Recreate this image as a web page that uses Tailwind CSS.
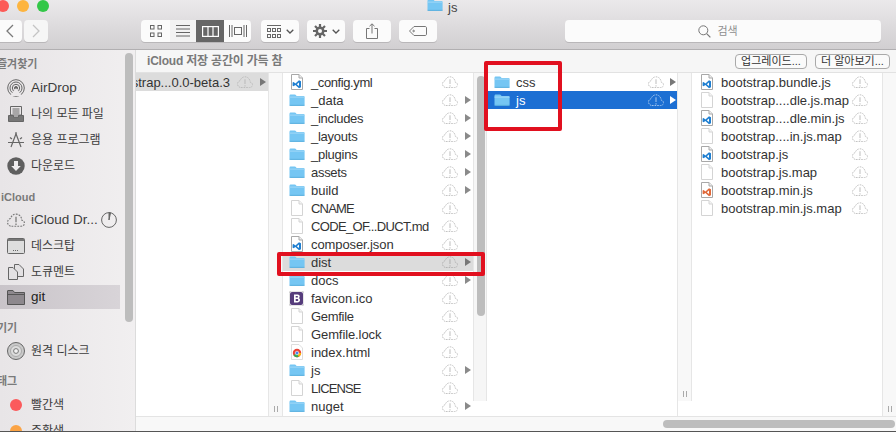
<!DOCTYPE html>
<html lang="ko">
<head>
<meta charset="utf-8">
<script src="https://cdn.jsdelivr.net/npm/@tailwindcss/browser@4"></script>
</head>
<body class="m-0 overflow-hidden bg-white">
<svg width="0" height="0" class="absolute">
  <defs>
    <symbol id="folder" viewBox="0 0 16 14" preserveAspectRatio="none">
      <g transform="translate(0 1) scale(1 .86)">
      <path d="M0.5 2.2C0.5 1.2 1 .6 2 .6H5.6C6.4.6 6.8 1 7.2 1.6L7.6 2.2H14.2C15 2.2 15.6 2.8 15.6 3.6V12.2C15.6 13 15 13.6 14.2 13.6H1.9C1 13.6.5 13 .5 12.2Z" fill="#75c6f3"/>
      <path d="M.5 3.6H15.6" stroke="#a6dcf8" stroke-width="1"/>
      <path d="M.5 13.2H15.6" stroke="#55acdd" stroke-width="1"/>
      </g>
    </symbol>
    <symbol id="file" viewBox="0 0 12 16">
      <path d="M.5.5H8L11.5 4V15.5H.5Z" fill="#fff" stroke="#d4d4d4"/>
      <path d="M8 .5V4H11.5" fill="#f4f4f4" stroke="#d4d4d4"/>
    </symbol>
    <symbol id="vsblue" viewBox="0 0 12 16">
      <path d="M.5.5H8L11.5 4V15.5H.5Z" fill="#fff" stroke="#a8a8a8"/>
      <path d="M8 .5V4H11.5" fill="#eee" stroke="#a8a8a8"/>
      <path d="M8 6.2L10 7.2V13.2L8 14.2L4.4 11L2.6 12.3L1.6 11.8V8.6L2.6 8.1L4.4 9.4ZM8 8.4L5.8 10.2L8 12Z" fill="#1f7fd1"/>
    </symbol>
    <symbol id="vsorange" viewBox="0 0 12 16">
      <path d="M.5.5H8L11.5 4V15.5H.5Z" fill="#fff" stroke="#a8a8a8"/>
      <path d="M8 .5V4H11.5" fill="#eee" stroke="#a8a8a8"/>
      <path d="M8 6.2L10 7.2V13.2L8 14.2L4.4 11L2.6 12.3L1.6 11.8V8.6L2.6 8.1L4.4 9.4ZM8 8.4L5.8 10.2L8 12Z" fill="#e0693a"/>
    </symbol>
    <symbol id="cloud" viewBox="0 0 16 12">
      <path d="M4 11.5H12.6C14.4 11.5 15.5 10.3 15.5 8.8C15.5 7.4 14.5 6.4 13.2 6.2C13 3 10.8.8 8 .8C5.6.8 3.8 2.4 3.2 4.6C1.6 5 .5 6.3.5 8C.5 10 2 11.5 4 11.5Z" fill="none" stroke="currentColor" stroke-dasharray="1.6 1"/>
      <path d="M8 3.2V8M8 9.2V10.4" stroke="currentColor" stroke-width="1.1"/>
    </symbol>
    <symbol id="arrow" viewBox="0 0 6 8">
      <path d="M0 0L6 4L0 8Z" fill="currentColor"/>
    </symbol>
  </defs>
</svg>

<div class="relative w-[896px] h-[432px] overflow-hidden flex flex-col text-[13px] text-[#333] [font-family:'Liberation_Sans','Noto_Sans_CJK_KR',sans-serif]">

  <!-- title bar -->
  <header class="h-[50px] shrink-0 flex flex-col border-b border-[#b1afb1] bg-gradient-to-b from-[#ebe9eb] to-[#d1cfd1]">
    <div class="h-[20px] flex items-start relative">
      <div class="flex gap-[8px] ml-[-3px] mt-0">
        <span class="size-[12px] rounded-full bg-[#fc5b57]"></span>
        <span class="size-[12px] rounded-full bg-[#fdb43f]"></span>
        <span class="size-[12px] rounded-full bg-[#33c748]"></span>
      </div>
      <div class="flex items-start ml-[378px] gap-[5px]">
        <svg class="w-[16px] h-[14px] mt-[-2px]"><use href="#folder"/></svg>
        <span class="text-[13px] leading-[14px] mt-[1px] text-[#444]">js</span>
      </div>
    </div>
    <div class="h-[22px] flex items-stretch">
      <div class="flex gap-[2px] ml-[-4px]">
        <div class="w-[26px] bg-[#fbfbfb] rounded-[4px] shadow-[0_1px_0_#b9b7b9] flex items-center justify-center"><svg width="9" height="14" viewBox="0 0 9 14"><path d="M8 1L2 7L8 13" fill="none" stroke="#7a7a7a" stroke-width="1.3"/></svg></div>
        <div class="w-[24px] bg-[#f6f6f6] rounded-[4px] shadow-[0_1px_0_#b9b7b9] flex items-center justify-center"><svg width="9" height="14" viewBox="0 0 9 14"><path d="M1 1L7 7L1 13" fill="none" stroke="#c4c4c4" stroke-width="1.3"/></svg></div>
      </div>
      <div class="flex ml-[93px] w-[110px] rounded-[4px] overflow-hidden bg-[#fbfbfb] shadow-[0_1px_0_#b9b7b9]">
        <div class="w-[29px] flex items-center justify-center"><svg width="14" height="14" viewBox="0 0 14 14" fill="none" stroke="#666"><rect x="1.5" y="1.5" width="3.5" height="3.5"/><rect x="9" y="1.5" width="3.5" height="3.5"/><rect x="1.5" y="9" width="3.5" height="3.5"/><rect x="9" y="9" width="3.5" height="3.5"/></svg></div>
        <div class="w-[26px] bg-[#f3f3f3] flex items-center justify-center"><svg width="16" height="12" viewBox="0 0 16 12" stroke="#666"><path d="M1 .5H15M1 4H15M1 7.5H15M1 11H15"/></svg></div>
        <div class="w-[28px] bg-[#666] flex items-center justify-center"><svg width="17" height="11" viewBox="0 0 17 11" fill="none" stroke="#fff" stroke-width="1.2"><rect x=".6" y=".6" width="15.8" height="9.8"/><path d="M6 .6V10.4M11 .6V10.4"/></svg></div>
        <div class="w-[27px] flex items-center justify-center"><svg width="18" height="12" viewBox="0 0 18 12" fill="none" stroke="#666"><path d="M.5 0V12M3 0V12M15 0V12M17.5 0V12"/><rect x="5.5" y="2.5" width="7" height="7"/></svg></div>
      </div>
      <div class="flex ml-[10px] w-[38px] rounded-[4px] bg-[#fbfbfb] shadow-[0_1px_0_#b9b7b9] items-center pl-[6px] gap-[5px]">
        <svg width="14" height="13" viewBox="0 0 14 13" fill="none" stroke="#666"><path d="M0 .5H14"/><rect x=".5" y="3.5" width="3" height="3"/><rect x="5.5" y="3.5" width="3" height="3"/><rect x="10.5" y="3.5" width="3" height="3"/><rect x=".5" y="9.5" width="3" height="3"/><rect x="5.5" y="9.5" width="3" height="3"/><rect x="10.5" y="9.5" width="3" height="3"/></svg>
        <svg width="8" height="5" viewBox="0 0 8 5"><path d="M.7.7L4 4L7.3.7" fill="none" stroke="#555" stroke-width="1.3"/></svg>
      </div>
      <div class="flex ml-[8px] w-[38px] rounded-[4px] bg-[#fbfbfb] shadow-[0_1px_0_#b9b7b9] items-center pl-[6px] gap-[5px]">
        <svg width="14" height="14" viewBox="0 0 14 14"><circle cx="7" cy="7" r="3.2" fill="none" stroke="#666" stroke-width="2.6"/><path d="M7 0V14M0 7H14M2 2L12 12M12 2L2 12" stroke="#666" stroke-width="2.2"/><circle cx="7" cy="7" r="2" fill="#fbfbfb"/></svg>
        <svg width="8" height="5" viewBox="0 0 8 5"><path d="M.7.7L4 4L7.3.7" fill="none" stroke="#555" stroke-width="1.3"/></svg>
      </div>
      <div class="flex ml-[8px] w-[38px] rounded-[4px] bg-[#fbfbfb] shadow-[0_1px_0_#b9b7b9] items-center justify-center">
        <svg width="12" height="16" viewBox="0 0 12 16" fill="none" stroke="#777"><path d="M3.5 5.5H.5V15.5H11.5V5.5H8.5"/><path d="M6 10.5V1M3.5 3.2L6 .8L8.5 3.2"/></svg>
      </div>
      <div class="flex ml-[8px] w-[38px] rounded-[4px] bg-[#fbfbfb] shadow-[0_1px_0_#b9b7b9] items-center justify-center">
        <svg width="18" height="10" viewBox="0 0 18 10" fill="none" stroke="#777"><path d="M5 .5H16C17 .5 17.5 1 17.5 2V8C17.5 9 17 9.5 16 9.5H5L.5 5Z"/><circle cx="4.6" cy="5" r=".8"/></svg>
      </div>
      <div class="flex ml-[128px] w-[316px] rounded-[4px] bg-[#fbfbfb] shadow-[0_1px_0_#b9b7b9] items-center justify-center gap-[6px] pr-[10px] text-[11px] text-[#8e8e8e]">
        <svg width="13" height="13" viewBox="0 0 13 13" fill="none" stroke="#777"><circle cx="5.3" cy="5.3" r="4.5"/><path d="M8.6 8.6L12.4 12.4" stroke-width="1.2"/></svg>
        <span>검색</span>
      </div>
    </div>
  </header>

  <div class="flex-1 min-h-0 flex">
    <!-- sidebar -->
    <aside class="relative w-[136px] shrink-0 overflow-hidden bg-gradient-to-r from-[#e8e5e7] to-[#f1eff0] border-r border-[#dcdcdc] pt-[7px]">
      <div class="h-[14px] flex items-center ml-[-3px] text-[11px] font-bold text-[#7a7a7a]">즐겨찾기</div>
      <nav class="mt-[4px] flex flex-col text-[#3c3c3c] w-[120px] text-[12px]">
        <div class="h-[26px] flex items-center gap-[6px] pl-[7px]">
          <svg width="18" height="18" viewBox="0 0 18 18" fill="none" stroke="#666"><circle cx="9" cy="9" r="8.3"/><circle cx="9" cy="9" r="6"/><circle cx="9" cy="9" r="3.7"/><circle cx="9" cy="9" r="1.5" fill="#666"/><path d="M9 9L3 17H15Z" fill="#ebe8ea" stroke="none"/></svg>
          <span class="text-[13.5px]">AirDrop</span>
        </div>
        <div class="h-[26px] flex items-center gap-[6px] pl-[7px]">
          <svg width="18" height="18" viewBox="0 0 18 18" fill="none" stroke="#666"><path d="M3.5 1.5H14.5V10H3.5Z"/><path d="M5.5 4H12.5M5.5 6H12.5M5.5 8H12.5"/><path d="M1.5 10.5H6.5V12H11.5V10.5H16.5V16.5H1.5Z" fill="#777"/></svg>
          <span>나의 모든 파일</span>
        </div>
        <div class="h-[26px] flex items-center gap-[6px] pl-[7px]">
          <svg width="18" height="18" viewBox="0 0 18 18" fill="none" stroke="#666" stroke-width="1.2"><path d="M9.5 1.5L4 16M8.5 1.5L14 16M1 11.5L17 11.5M3 6.5L5 8M15 6.5L13 8"/></svg>
          <span>응용 프로그램</span>
        </div>
        <div class="h-[26px] flex items-center gap-[6px] pl-[7px]">
          <svg width="18" height="18" viewBox="0 0 18 18"><circle cx="9" cy="9" r="8.7" fill="#5f5f5f"/><path d="M7 4H11V9H13.8L9 14L4.2 9H7Z" fill="#f0eef0"/></svg>
          <span>다운로드</span>
        </div>
      </nav>
      <div class="mt-[11px] h-[14px] flex items-center ml-[1px] text-[11px] font-bold text-[#7a7a7a]">iCloud</div>
      <nav class="mt-[3px] flex flex-col text-[#3c3c3c] w-[120px] text-[12px]">
        <div class="h-[26px] flex items-center gap-[6px] pl-[7px] whitespace-nowrap">
          <svg class="w-[18px] h-[14px] text-[#777]"><use href="#cloud"/></svg>
          <span class="text-[13.5px]">iCloud Dr...</span>
          <svg class="ml-[-3px] shrink-0" width="16" height="16" viewBox="0 0 16 16"><circle cx="8" cy="8" r="7.4" fill="none" stroke="#666"/><path d="M8 8V.6A7.4 7.4 0 0 1 9.5 .8Z" fill="#666" stroke="#666"/></svg>
        </div>
        <div class="h-[26px] flex items-center gap-[6px] pl-[7px]">
          <svg width="18" height="16" viewBox="0 0 18 16"><rect x=".5" y=".5" width="17" height="15" rx="1" fill="#ddd" stroke="#666"/><rect x="1" y="1" width="16" height="2" fill="#777"/><path d="M6 12.5H12" stroke="#666" stroke-dasharray="1 1"/></svg>
          <span>데스크탑</span>
        </div>
        <div class="h-[26px] flex items-center gap-[6px] pl-[7px]">
          <svg width="18" height="18" viewBox="0 0 18 18" fill="#e3e1e3" stroke="#666"><path d="M7.5 1.5H12L16.5 6V13.5H7.5Z"/><path d="M1.5 4.5H6L10.5 9V16.5H1.5Z"/></svg>
          <span>도큐멘트</span>
        </div>
        <div class="h-[24px] flex items-center gap-[6px] pl-[7px] bg-gradient-to-r from-[#c9c4c9] to-[#d8d4d8] text-[#222]">
          <svg width="18" height="15" viewBox="0 0 18 15"><path d="M.5 14.5V1C.5.7.7.5 1 .5H6L7.5 2.5H17.5V14.5Z" fill="#8d888d" stroke="#555"/><path d="M.5 4.5H17.5" stroke="#555"/></svg>
          <span class="text-[13.5px]">git</span>
        </div>
      </nav>
      <div class="mt-[12px] h-[14px] flex items-center ml-[-3px] text-[11px] font-bold text-[#7a7a7a]">기기</div>
      <nav class="mt-[3px] flex flex-col text-[#3c3c3c] w-[120px] text-[12px]">
        <div class="h-[26px] flex items-center gap-[6px] pl-[7px]">
          <svg width="18" height="18" viewBox="0 0 18 18"><circle cx="9" cy="9" r="8.5" fill="#c9c9c9" stroke="#666"/><circle cx="9" cy="9" r="5.5" fill="#dcdcdc" stroke="#aaa"/><circle cx="9" cy="9" r="2.4" fill="#f3f3f3" stroke="#777"/></svg>
          <span>원격 디스크</span>
        </div>
      </nav>
      <div class="mt-[10px] h-[14px] flex items-center ml-[-3px] text-[11px] font-bold text-[#7a7a7a]">태그</div>
      <nav class="mt-[4px] flex flex-col text-[#3c3c3c] w-[120px] text-[12px]">
        <div class="h-[26px] flex items-center gap-[9px] pl-[10px]">
          <span class="size-[12px] rounded-full bg-[#fb5a5c]"></span>
          <span>빨간색</span>
        </div>
        <div class="h-[26px] flex items-center gap-[9px] pl-[10px]">
          <span class="size-[12px] rounded-full bg-[#fba345]"></span>
          <span>주황색</span>
        </div>
      </nav>
      <div class="absolute left-[125px] top-[3px] w-[8px] h-[269px] rounded-full bg-[#bdbdbd]"></div>
    </aside>

    <!-- browser -->
    <main class="flex-1 min-w-0 flex flex-col bg-white">
      <div class="h-[23px] shrink-0 flex items-center bg-[#f6f6f6] border-b border-[#e2e2e2]">
        <span class="ml-[11px] text-[12px] tracking-[-0.2px] font-bold text-[#7a7a7a]">iCloud 저장 공간이 가득 참</span>
        <button class="ml-auto w-[72px] h-[15px] rounded-[4px] border border-[#a9a9a9] bg-[#fafafa] text-[11px] leading-[13px] text-[#333] whitespace-nowrap">업그레이드...</button>
        <button class="ml-[8px] mr-[6px] w-[75px] h-[15px] rounded-[4px] border border-[#a9a9a9] bg-[#fafafa] text-[11px] leading-[13px] text-[#333] whitespace-nowrap">더 알아보기...</button>
      </div>

      <div class="h-[344px] shrink-0 flex border-b border-[#e4e4e4]">
        <!-- column 1 -->
        <section class="w-[133px] shrink-0 border-r border-[#e6e6e6] [&_span]:translate-y-[1px]">
          <div class="h-[18px] flex items-center justify-end overflow-hidden bg-[#dcdcdc] whitespace-nowrap pr-[2px]">
            <span>bootstrap...0.0-beta.3</span>
            <svg class="ml-[7px] w-[16px] h-[12px] text-[#bdbdbd] shrink-0"><use href="#cloud"/></svg>
            <svg class="ml-[7px] w-[6px] h-[8px] text-[#777] shrink-0"><use href="#arrow"/></svg>
          </div>
        </section>
        <div class="w-[14px] shrink-0 bg-[#f8f8f8] border-r border-[#e6e6e6] flex items-end justify-center pb-[4px]"><span class="w-[4px] h-[6px] border-x border-[#aaa]"></span></div>

        <!-- column 2 -->
        <section class="w-[190px] shrink-0 [&_span]:translate-y-[1px]">
          <div class="h-[18px] flex items-center pl-[7px] pr-[2px]"><svg class="w-[12px] h-[16px] ml-[1px] mr-[8px]"><use href="#vsblue"/></svg><span class="tracking-[-0.4px]">_config.yml</span><svg class="ml-auto mr-[13px] w-[16px] h-[12px] text-[#c4c4c4]"><use href="#cloud"/></svg></div>
          <div class="h-[18px] flex items-center pl-[6px] pr-[2px]"><svg class="w-[16px] h-[14px] mr-[6px]"><use href="#folder"/></svg><span>_data</span><svg class="ml-auto w-[16px] h-[12px] text-[#c4c4c4]"><use href="#cloud"/></svg><svg class="ml-[7px] w-[6px] h-[8px] text-[#8a8a8a]"><use href="#arrow"/></svg></div>
          <div class="h-[18px] flex items-center pl-[6px] pr-[2px]"><svg class="w-[16px] h-[14px] mr-[6px]"><use href="#folder"/></svg><span class="tracking-[-0.3px]">_includes</span><svg class="ml-auto w-[16px] h-[12px] text-[#c4c4c4]"><use href="#cloud"/></svg><svg class="ml-[7px] w-[6px] h-[8px] text-[#8a8a8a]"><use href="#arrow"/></svg></div>
          <div class="h-[18px] flex items-center pl-[6px] pr-[2px]"><svg class="w-[16px] h-[14px] mr-[6px]"><use href="#folder"/></svg><span class="tracking-[-0.25px]">_layouts</span><svg class="ml-auto w-[16px] h-[12px] text-[#c4c4c4]"><use href="#cloud"/></svg><svg class="ml-[7px] w-[6px] h-[8px] text-[#8a8a8a]"><use href="#arrow"/></svg></div>
          <div class="h-[18px] flex items-center pl-[6px] pr-[2px]"><svg class="w-[16px] h-[14px] mr-[6px]"><use href="#folder"/></svg><span class="tracking-[-0.25px]">_plugins</span><svg class="ml-auto w-[16px] h-[12px] text-[#c4c4c4]"><use href="#cloud"/></svg><svg class="ml-[7px] w-[6px] h-[8px] text-[#8a8a8a]"><use href="#arrow"/></svg></div>
          <div class="h-[18px] flex items-center pl-[6px] pr-[2px]"><svg class="w-[16px] h-[14px] mr-[6px]"><use href="#folder"/></svg><span class="tracking-[-0.3px]">assets</span><svg class="ml-auto w-[16px] h-[12px] text-[#c4c4c4]"><use href="#cloud"/></svg><svg class="ml-[7px] w-[6px] h-[8px] text-[#8a8a8a]"><use href="#arrow"/></svg></div>
          <div class="h-[18px] flex items-center pl-[6px] pr-[2px]"><svg class="w-[16px] h-[14px] mr-[6px]"><use href="#folder"/></svg><span>build</span><svg class="ml-auto w-[16px] h-[12px] text-[#c4c4c4]"><use href="#cloud"/></svg><svg class="ml-[7px] w-[6px] h-[8px] text-[#8a8a8a]"><use href="#arrow"/></svg></div>
          <div class="h-[18px] flex items-center pl-[7px] pr-[2px]"><svg class="w-[12px] h-[16px] ml-[1px] mr-[8px]"><use href="#file"/></svg><span class="tracking-[-0.8px]">CNAME</span><svg class="ml-auto mr-[13px] w-[16px] h-[12px] text-[#c4c4c4]"><use href="#cloud"/></svg></div>
          <div class="h-[18px] flex items-center pl-[7px] pr-[2px]"><svg class="w-[12px] h-[16px] ml-[1px] mr-[8px]"><use href="#file"/></svg><span class="tracking-[-0.65px]">CODE_OF...DUCT.md</span><svg class="ml-auto mr-[13px] w-[16px] h-[12px] text-[#c4c4c4]"><use href="#cloud"/></svg></div>
          <div class="h-[18px] flex items-center pl-[7px] pr-[2px]"><svg class="w-[12px] h-[16px] ml-[1px] mr-[8px]"><use href="#vsblue"/></svg><span class="tracking-[-0.1px]">composer.json</span><svg class="ml-auto mr-[13px] w-[16px] h-[12px] text-[#c4c4c4]"><use href="#cloud"/></svg></div>
          <div class="h-[18px] flex items-center pl-[6px] pr-[2px] bg-[#dcdcdc]"><svg class="w-[16px] h-[14px] mr-[6px]"><use href="#folder"/></svg><span>dist</span><svg class="ml-auto w-[16px] h-[12px] text-[#b4b4b4]"><use href="#cloud"/></svg><svg class="ml-[7px] w-[6px] h-[8px] text-[#777]"><use href="#arrow"/></svg></div>
          <div class="h-[18px] flex items-center pl-[6px] pr-[2px]"><svg class="w-[16px] h-[14px] mr-[6px]"><use href="#folder"/></svg><span>docs</span><svg class="ml-auto w-[16px] h-[12px] text-[#c4c4c4]"><use href="#cloud"/></svg><svg class="ml-[7px] w-[6px] h-[8px] text-[#8a8a8a]"><use href="#arrow"/></svg></div>
          <div class="h-[18px] flex items-center pl-[6px] pr-[2px]"><svg class="w-[15px] h-[15px] mr-[7px]" viewBox="0 0 15 15"><rect width="15" height="15" rx="2.5" fill="#fff" stroke="#ccc"/><rect x="1" y="1" width="13" height="13" rx="2" fill="#563d7c"/><path d="M5 3.5H8.5C10 3.5 10.7 4.3 10.7 5.4C10.7 6.3 10.2 6.9 9.6 7.1C10.5 7.3 11 8.1 11 9C11 10.5 10 11.5 8.4 11.5H5ZM6.7 4.9V6.6H8.1C8.7 6.6 9 6.3 9 5.7C9 5.2 8.7 4.9 8.1 4.9ZM6.7 7.9V10.1H8.2C8.9 10.1 9.3 9.7 9.3 9C9.3 8.3 8.9 7.9 8.2 7.9Z" fill="#fff"/></svg><span>favicon.ico</span><svg class="ml-auto mr-[13px] w-[16px] h-[12px] text-[#c4c4c4]"><use href="#cloud"/></svg></div>
          <div class="h-[18px] flex items-center pl-[7px] pr-[2px]"><svg class="w-[12px] h-[16px] ml-[1px] mr-[8px]"><use href="#file"/></svg><span class="tracking-[-0.3px]">Gemfile</span><svg class="ml-auto mr-[13px] w-[16px] h-[12px] text-[#c4c4c4]"><use href="#cloud"/></svg></div>
          <div class="h-[18px] flex items-center pl-[7px] pr-[2px]"><svg class="w-[12px] h-[16px] ml-[1px] mr-[8px]"><use href="#file"/></svg><span class="tracking-[-0.1px]">Gemfile.lock</span><svg class="ml-auto mr-[13px] w-[16px] h-[12px] text-[#c4c4c4]"><use href="#cloud"/></svg></div>
          <div class="h-[18px] flex items-center pl-[7px] pr-[2px]"><svg class="w-[12px] h-[16px] ml-[1px] mr-[8px]" viewBox="0 0 12 16"><path d="M.5.5H8L11.5 4V15.5H.5Z" fill="#fff" stroke="#ddd"/><circle cx="6" cy="9" r="4.2" fill="#eb4335"/><path d="M6 9L2.4 11.2A4.2 4.2 0 0 0 7.8 12.8Z" fill="#34a853"/><path d="M6 9L10.2 9A4.2 4.2 0 0 1 7.8 12.8Z" fill="#fbbc05"/><circle cx="6" cy="9" r="1.8" fill="#4285f4" stroke="#fff" stroke-width=".6"/></svg><span>index.html</span><svg class="ml-auto mr-[13px] w-[16px] h-[12px] text-[#c4c4c4]"><use href="#cloud"/></svg></div>
          <div class="h-[18px] flex items-center pl-[6px] pr-[2px]"><svg class="w-[16px] h-[14px] mr-[6px]"><use href="#folder"/></svg><span>js</span><svg class="ml-auto w-[16px] h-[12px] text-[#c4c4c4]"><use href="#cloud"/></svg><svg class="ml-[7px] w-[6px] h-[8px] text-[#8a8a8a]"><use href="#arrow"/></svg></div>
          <div class="h-[18px] flex items-center pl-[7px] pr-[2px]"><svg class="w-[12px] h-[16px] ml-[1px] mr-[8px]"><use href="#file"/></svg><span class="tracking-[-0.85px]">LICENSE</span><svg class="ml-auto mr-[13px] w-[16px] h-[12px] text-[#c4c4c4]"><use href="#cloud"/></svg></div>
          <div class="h-[18px] flex items-center pl-[6px] pr-[2px]"><svg class="w-[16px] h-[14px] mr-[6px]"><use href="#folder"/></svg><span>nuget</span><svg class="ml-auto w-[16px] h-[12px] text-[#c4c4c4]"><use href="#cloud"/></svg><svg class="ml-[7px] w-[6px] h-[8px] text-[#8a8a8a]"><use href="#arrow"/></svg></div>
        </section>
        <div class="relative w-[14px] shrink-0 h-[328px] bg-[#f6f6f6] border-x border-[#e6e6e6]">
          <div class="absolute left-[3px] top-[3px] w-[8px] h-[240px] rounded-full bg-[#bdbdbd]"></div>
        </div>

        <!-- column 3 -->
        <section class="w-[191px] shrink-0 border-r border-[#e6e6e6] [&_span]:translate-y-[1px]">
          <div class="h-[18px] flex items-center pl-[7px] pr-[1px]"><svg class="w-[16px] h-[14px] mr-[6px]"><use href="#folder"/></svg><span>css</span><svg class="ml-auto w-[16px] h-[12px] text-[#c4c4c4]"><use href="#cloud"/></svg><svg class="ml-[6px] w-[6px] h-[8px] text-[#777]"><use href="#arrow"/></svg></div>
          <div class="h-[18px] flex items-center pl-[7px] pr-[1px] bg-[#1c6fd3] text-white"><svg class="w-[16px] h-[14px] mr-[6px]"><use href="#folder"/></svg><span>js</span><svg class="ml-auto w-[16px] h-[12px] text-[#9cc2ee]"><use href="#cloud"/></svg><svg class="ml-[6px] w-[6px] h-[8px] text-white"><use href="#arrow"/></svg></div>
        </section>
        <div class="w-[14px] shrink-0 h-[328px] bg-[#f8f8f8] border-r border-[#e6e6e6] flex items-end justify-center pb-[4px]"><span class="w-[4px] h-[6px] border-x border-[#aaa]"></span></div>

        <!-- column 4 -->
        <section class="w-[191px] shrink-0 border-r border-[#e6e6e6] [&_span]:translate-y-[1px]">
          <div class="h-[18px] flex items-center pl-[9px]"><svg class="w-[12px] h-[16px] mr-[8px]"><use href="#vsblue"/></svg><span>bootstrap.bundle.js</span><svg class="ml-auto mr-[14px] w-[16px] h-[12px] text-[#c4c4c4]"><use href="#cloud"/></svg></div>
          <div class="h-[18px] flex items-center pl-[9px]"><svg class="w-[12px] h-[16px] mr-[8px]"><use href="#file"/></svg><span>bootstrap....dle.js.map</span><svg class="ml-auto mr-[14px] w-[16px] h-[12px] text-[#c4c4c4]"><use href="#cloud"/></svg></div>
          <div class="h-[18px] flex items-center pl-[9px]"><svg class="w-[12px] h-[16px] mr-[8px]"><use href="#vsblue"/></svg><span>bootstrap....dle.min.js</span><svg class="ml-auto mr-[14px] w-[16px] h-[12px] text-[#c4c4c4]"><use href="#cloud"/></svg></div>
          <div class="h-[18px] flex items-center pl-[9px]"><svg class="w-[12px] h-[16px] mr-[8px]"><use href="#file"/></svg><span>bootstrap....in.js.map</span><svg class="ml-auto mr-[14px] w-[16px] h-[12px] text-[#c4c4c4]"><use href="#cloud"/></svg></div>
          <div class="h-[18px] flex items-center pl-[9px]"><svg class="w-[12px] h-[16px] mr-[8px]"><use href="#vsblue"/></svg><span>bootstrap.js</span><svg class="ml-auto mr-[14px] w-[16px] h-[12px] text-[#c4c4c4]"><use href="#cloud"/></svg></div>
          <div class="h-[18px] flex items-center pl-[9px]"><svg class="w-[12px] h-[16px] mr-[8px]"><use href="#file"/></svg><span>bootstrap.js.map</span><svg class="ml-auto mr-[14px] w-[16px] h-[12px] text-[#c4c4c4]"><use href="#cloud"/></svg></div>
          <div class="h-[18px] flex items-center pl-[9px]"><svg class="w-[12px] h-[16px] mr-[8px]"><use href="#vsorange"/></svg><span>bootstrap.min.js</span><svg class="ml-auto mr-[14px] w-[16px] h-[12px] text-[#c4c4c4]"><use href="#cloud"/></svg></div>
          <div class="h-[18px] flex items-center pl-[9px]"><svg class="w-[12px] h-[16px] mr-[8px]"><use href="#file"/></svg><span>bootstrap.min.js.map</span><svg class="ml-auto mr-[14px] w-[16px] h-[12px] text-[#c4c4c4]"><use href="#cloud"/></svg></div>
        </section>
        <div class="flex-1 bg-[#f8f8f8] flex items-end justify-center pb-[4px]"><span class="w-[4px] h-[6px] border-x border-[#aaa]"></span></div>
      </div>

      <!-- horizontal scrollbar -->
      <div class="flex-1 bg-[#f8f8f8] pt-[3px] pl-[527px] pr-[1px]">
        <div class="h-[8px] rounded-full bg-[#bdbdbd]"></div>
      </div>
    </main>
  </div>
  <div class="h-[1px] shrink-0 bg-[#555]"></div>

  <!-- red annotation boxes -->
  <div class="absolute left-[484px] top-[61px] w-[78px] h-[70px] border-[4px] border-[#e1101f] rounded-[2px]"></div>
  <div class="absolute left-[277px] top-[252px] w-[208px] h-[24px] border-[4px] border-[#e1101f] rounded-[2px]"></div>
</div>
</body>
</html>
